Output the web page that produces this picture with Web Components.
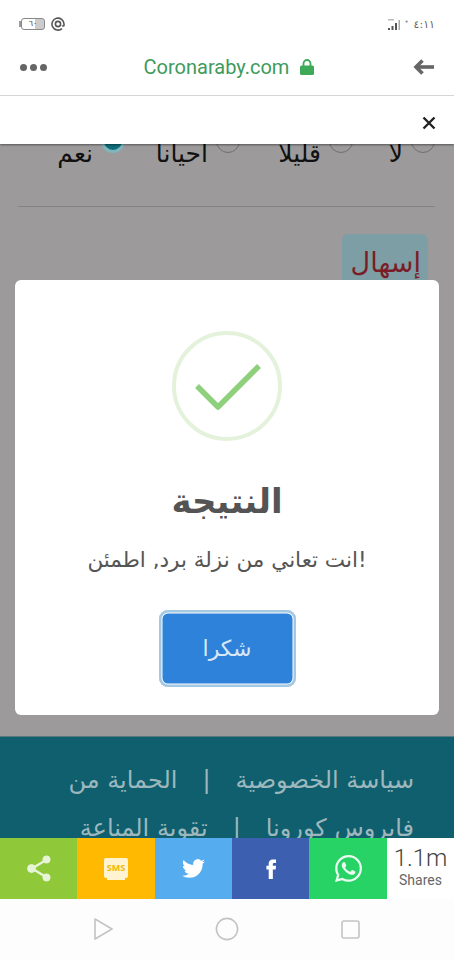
<!DOCTYPE html>
<html lang="ar">
<head>
<meta charset="utf-8">
<title>Coronaraby</title>
<style>
  html, body { margin: 0; padding: 0; height: 100%; background: #fff; }
  body { font-family: "DejaVu Sans", "Noto Sans", sans-serif; }
  .phone { width: 454px; height: 960px; display: flex; flex-direction: column; overflow: hidden; }
</style>
</head>
<body>
<div class="phone">
  <status-bar></status-bar>
  <browser-bar></browser-bar>
  <ad-strip></ad-strip>
  <page-area>
    <radio-row></radio-row>
    <symptom-tag>إسهال</symptom-tag>
    <site-footer slot="footer"></site-footer>
    <result-modal slot="modal" heading="النتيجة" message="!انت تعاني من نزلة برد, اطمئن" action="شكرا"></result-modal>
  </page-area>
  <share-bar></share-bar>
  <nav-bar></nav-bar>
</div>

<script>
class StatusBar extends HTMLElement {
  connectedCallback() {
    this.attachShadow({ mode: 'open' });
    this.shadowRoot.innerHTML = `
      <style>
        :host { display: flex; justify-content: space-between; align-items: center; height: 48px; padding: 0 19px 0 21px; box-sizing: border-box; color: #666; font-family: "DejaVu Sans", sans-serif; }
        .left, .right { display: flex; align-items: center; }
        .left { gap: 6px; }
        .right { gap: 2px; }
        .batt { position: relative; width: 24px; height: 12px; border: 1px solid #888; border-radius: 3px; box-sizing: border-box; font-size: 8px; line-height: 10px; text-align: center; background: linear-gradient(90deg, #fff 58%, #ccc 58%); color: #444; }
        .batt::before { content: ""; position: absolute; left: -3px; top: 2px; width: 2px; height: 6px; background: #999; }
        .time { font-size: 11px; margin-left: 3px; color: #666; }
        .dot { font-size: 7px; color: #888; margin-bottom: 5px; }
      </style>
      <div class="left">
        <div class="batt">٦٠</div>
        <svg width="14" height="14" viewBox="0 0 14 14" fill="none" stroke="#555" stroke-width="1.6"><path d="M11 11.6A6 6 0 1 1 13 7v1.2c0 1-1.6 1-1.6 0"/><circle cx="7" cy="7" r="2.6"/></svg>
      </div>
      <div class="right" dir="ltr">
        <svg width="14" height="13" viewBox="0 0 14 13" fill="#555"><rect x="0" y="10" width="2" height="2"/><rect x="3.500" y="8" width="2" height="4"/><rect x="7" y="5" width="2" height="7"/><rect x="10.500" y="2" width="1.500" height="10" fill="#aaa"/><rect x="0" y="1" width="6" height="1.500" fill="#bbb"/></svg>
        <span class="dot">•</span>
        <span class="time">٤:١١</span>
      </div>`;
  }
}

class BrowserBar extends HTMLElement {
  connectedCallback() {
    this.attachShadow({ mode: 'open' });
    this.shadowRoot.innerHTML = `
      <style>
        :host { display: flex; align-items: center; justify-content: space-between; height: 48px; padding: 0 20px 9px; box-sizing: border-box; border-bottom: 1px solid #ddd; }
        .dots { display: flex; gap: 3px; width: 27px; }
        .dots i { width: 7px; height: 7px; border-radius: 50%; background: #666; }
        .url { display: flex; align-items: center; gap: 11px; margin-right: 2px; font: 20px Roboto, sans-serif; color: #3f9a5c; }
      </style>
      <div class="dots"><i></i><i></i><i></i></div>
      <div class="url">
        <span>Coronaraby.com</span>
        <svg width="14" height="16" viewBox="0 0 14 16"><path d="M3.500 7V4.500a3.500 3.500 0 0 1 7 0V7" fill="none" stroke="#3fa95a" stroke-width="1.800"/><rect x="0" y="6.500" width="14" height="9.500" rx="1.500" fill="#3fa95a"/></svg>
      </div>
      <svg width="21" height="16" viewBox="0 0 21 16" fill="none" stroke="#666" stroke-width="3.600"><path d="M21 8H4"/><path d="M9.500 1.500L3 8l6.500 6.500"/></svg>`;
  }
}

class AdStrip extends HTMLElement {
  connectedCallback() {
    this.attachShadow({ mode: 'open' });
    this.shadowRoot.innerHTML = `
      <style>
        :host { display: flex; align-items: center; justify-content: flex-end; height: 48px; padding: 6px 18px 0 0; box-sizing: border-box; background: #fff; position: relative; z-index: 2; box-shadow: 0 1px 2px rgba(0,0,0,.45); }
      </style>
      <svg width="14" height="14" viewBox="0 0 14 14" stroke="#222" stroke-width="2.400"><path d="M1.500 1.500l11 11M12.500 1.500l-11 11"/></svg>`;
  }
}

class PageArea extends HTMLElement {
  connectedCallback() {
    this.attachShadow({ mode: 'open' });
    this.shadowRoot.innerHTML = `
      <style>
        :host { display: flex; flex-direction: column; flex: 1; min-height: 0; position: relative; background: #9c9a9b; }
        .scroll { flex: 1; min-height: 0; overflow: hidden; }
        .inner { margin-top: -15px; }
      </style>
      <div class="scroll"><div class="inner"><slot></slot></div></div>
      <slot name="footer"></slot>
      <slot name="modal"></slot>`;
  }
}

class RadioRow extends HTMLElement {
  connectedCallback() {
    this.attachShadow({ mode: 'open' });
    const items = [['لا', false], ['قليلا', false], ['احيانا', false], ['نعم', true]];
    this.shadowRoot.innerHTML = `
      <style>
        :host { display: block; margin: 0 19px 0 18px; height: 78px; border-bottom: 1px solid #858484; box-sizing: border-box; direction: rtl; font-family: "DejaVu Sans", sans-serif; }
        .row { display: grid; grid-template-columns: 82px 113px 115px auto; }
        label { display: flex; align-items: flex-start; gap: 8px; font-size: 25px; color: #111; line-height: 30px; white-space: nowrap; }
        .r { width: 24px; height: 24px; flex: none; border-radius: 50%; box-sizing: border-box; border: 1px solid #6f6f6f; }
        .r.on { background: #0d6c78; border: 3px solid #7fb6bd; }
        span { padding-top: 10px; }
      </style>
      <div class="row">${items.map(([t, on]) => `<label><div class="r${on ? ' on' : ''}"></div><span>${t}</span></label>`).join('')}</div>`;
  }
}

class SymptomTag extends HTMLElement {
  connectedCallback() {
    this.attachShadow({ mode: 'open' });
    this.shadowRoot.innerHTML = `
      <style>
        :host { display: flex; justify-content: flex-start; margin: 27px 26px 0 0; direction: rtl; }
        div { width: 86px; height: 70px; box-sizing: border-box; padding: 12px 7px 0 0; border-radius: 6px; background: #7e9ea5; color: #7a1d27; font: 27px/34px "DejaVu Sans", sans-serif; text-align: right; white-space: nowrap; }
      </style>
      <div><slot></slot></div>`;
  }
}

class SiteFooter extends HTMLElement {
  connectedCallback() {
    this.attachShadow({ mode: 'open' });
    this.shadowRoot.innerHTML = `
      <style>
        :host { display: block; flex: none; height: 102px; overflow: hidden; box-sizing: border-box; padding: 19px 40px 0 0; background: #0f5f6e; border-top: 1px solid #5a7a82; color: #9db8bd; direction: rtl; font: 24px/48px "DejaVu Sans", sans-serif; }
        .line { display: flex; white-space: nowrap; }
        .sep { margin: 0 25px; }
      </style>
      <div class="line"><span>سياسة الخصوصية</span><span class="sep">|</span><span>الحماية من</span></div>
      <div class="line"><span>فايروس كورونا</span><span class="sep">|</span><span>تقوية المناعة</span></div>`;
  }
}

class ResultModal extends HTMLElement {
  connectedCallback() {
    this.attachShadow({ mode: 'open' });
    this.shadowRoot.innerHTML = `
      <style>
        :host { position: absolute; left: 15px; top: 136px; width: 424px; height: 435px; box-sizing: border-box; padding-top: 51px; display: flex; flex-direction: column; align-items: center; background: #fff; border-radius: 6px; font-family: "DejaVu Sans", sans-serif; color: #555; }
        svg { display: block; }
        h2 { margin: 37px 0 0; font-size: 34px; line-height: 46px; font-weight: 700; color: #545454; }
        p { margin: 21px 0 0; font-size: 21.500px; line-height: 30px; color: #555; white-space: nowrap; }
        button { margin-top: 35px; width: 137px; height: 77px; border-radius: 9px; border: none; background: #2f82d9; box-shadow: inset 0 0 0 2.500px #a4c8e2, inset 0 0 0 3.500px #fff; color: #d9e8f7; font: 22px "DejaVu Sans", sans-serif; padding: 0; }
      </style>
      <svg width="110" height="110" viewBox="0 0 110 110" fill="none">
        <circle cx="55" cy="55" r="53" stroke="#e4f2dc" stroke-width="4"/>
        <path d="M25 55l21 21L87 35" stroke="#8fd07d" stroke-width="5.500" stroke-linejoin="round"/>
      </svg>
      <h2 dir="rtl">${this.getAttribute('heading')}</h2>
      <p dir="rtl">${this.getAttribute('message')}</p>
      <button>${this.getAttribute('action')}</button>`;
  }
}

class ShareBar extends HTMLElement {
  connectedCallback() {
    this.attachShadow({ mode: 'open' });
    this.shadowRoot.innerHTML = `
      <style>
        :host { display: grid; grid-template-columns: 77px 78px 77px 77px 78px 67px; height: 61px; position: relative; z-index: 1; }
        .b { display: flex; align-items: center; justify-content: center; }
        .count { display: flex; flex-direction: column; align-items: center; background: #fff; padding-top: 7px; box-sizing: border-box; }
        b { font: 300 24px/26px Roboto, sans-serif; color: #444; }
        small { margin-top: 2px; font: 14px/15px Roboto, sans-serif; color: #666; }
        .sms { width: 24px; height: 20px; margin-top: -2px; border-radius: 2px; background: #fff3d0; color: #f2b705; font: 700 9px/20px "Open Sans", sans-serif; text-align: center; position: relative; }
        .sms::after { content: ""; position: absolute; left: 3px; right: 3px; bottom: -2px; height: 2px; background: #fff3d0; }
      </style>
      <div class="b" style="background:#8fc93a">
        <svg width="24" height="27" viewBox="0 0 24 27" fill="#e8f4d8" stroke="#e8f4d8"><path d="M19 5L5 13.500 19 22" fill="none" stroke-width="2.400"/><circle cx="19.500" cy="4.500" r="3.600"/><circle cx="4.500" cy="13.500" r="3.900"/><circle cx="19.500" cy="22.500" r="3.600"/></svg>
      </div>
      <div class="b" style="background:#ffb900"><div class="sms">SMS</div></div>
      <div class="b" style="background:#55acee">
        <svg width="23" height="23" viewBox="0 0 24 24" fill="#fff"><path d="M23.953 4.570a10 10 0 01-2.825.775 4.958 4.958 0 002.163-2.723c-.951.555-2.005.959-3.127 1.184a4.920 4.920 0 00-8.384 4.482C7.690 8.095 4.067 6.130 1.640 3.162a4.822 4.822 0 00-.666 2.475c0 1.710.870 3.213 2.188 4.096a4.904 4.904 0 01-2.228-.616v.060a4.923 4.923 0 003.946 4.827 4.996 4.996 0 01-2.212.085 4.936 4.936 0 004.604 3.417 9.867 9.867 0 01-6.102 2.105c-.390 0-.779-.023-1.170-.067a13.995 13.995 0 007.557 2.209c9.053 0 13.998-7.496 13.998-13.985 0-.210 0-.420-.015-.630A9.935 9.935 0 0024 4.590z"/></svg>
      </div>
      <div class="b" style="background:#3d5fb0">
        <svg width="22" height="22" viewBox="0 0 24 24" fill="#fff"><path d="M14 8.500V6.500c0-.9.600-1.100 1-1.100h2.500V1.600L14.100 1.500C10.300 1.500 9.500 4.300 9.500 6.200v2.300H7v4h2.500V23H14V12.500h3.100l.4-4z"/></svg>
      </div>
      <div class="b" style="background:#28d366">
        <svg width="27" height="27" viewBox="0 0 24 24" fill="#eafaf0"><path d="M17.472 14.382c-.297-.149-1.758-.867-2.030-.967-.273-.099-.471-.148-.670.150-.197.297-.767.966-.940 1.164-.173.199-.347.223-.644.075-.297-.150-1.255-.463-2.390-1.475-.883-.788-1.480-1.761-1.653-2.059-.173-.297-.018-.458.130-.606.134-.133.298-.347.446-.520.149-.174.198-.298.298-.497.099-.198.050-.371-.025-.520-.075-.149-.669-1.612-.916-2.207-.242-.579-.487-.500-.669-.510-.173-.008-.371-.010-.570-.010-.198 0-.520.074-.792.372-.272.297-1.040 1.016-1.040 2.479 0 1.462 1.065 2.875 1.213 3.074.149.198 2.096 3.200 5.077 4.487.709.306 1.262.489 1.694.625.712.227 1.360.195 1.871.118.571-.085 1.758-.719 2.006-1.413.248-.694.248-1.289.173-1.413-.074-.124-.272-.198-.570-.347m-5.421 7.403h-.004a9.870 9.870 0 01-5.031-1.378l-.361-.214-3.741.982.998-3.648-.235-.374a9.860 9.860 0 01-1.510-5.260c.001-5.450 4.436-9.884 9.888-9.884 2.640 0 5.122 1.030 6.988 2.898a9.825 9.825 0 012.893 6.994c-.003 5.450-4.437 9.884-9.885 9.884m8.413-18.297A11.815 11.815 0 0012.050 0C5.495 0 .160 5.335.157 11.892c0 2.096.547 4.142 1.588 5.945L.057 24l6.305-1.654a11.882 11.882 0 005.683 1.448h.005c6.554 0 11.890-5.335 11.893-11.893a11.821 11.821 0 00-3.480-8.413z"/></svg>
      </div>
      <div class="count"><b>1.1m</b><small>Shares</small></div>`;
  }
}

class NavBar extends HTMLElement {
  connectedCallback() {
    this.attachShadow({ mode: 'open' });
    this.shadowRoot.innerHTML = `
      <style>
        :host { display: flex; align-items: center; height: 61px; background: #fdfdfd; position: relative; }
        svg { position: absolute; }
      </style>
      <svg style="left:93px;top:18px" width="21" height="24" viewBox="0 0 21 24" fill="none" stroke="#c4c4c4" stroke-width="1.600" stroke-linejoin="round"><path d="M2 2l17 10L2 22z"/></svg>
      <svg style="left:215px;top:18px" width="24" height="24" viewBox="0 0 24 24" fill="none" stroke="#c4c4c4" stroke-width="1.600"><circle cx="12" cy="12" r="10.600"/></svg>
      <svg style="left:341px;top:21px" width="19" height="19" viewBox="0 0 19 19" fill="none" stroke="#c4c4c4" stroke-width="1.600"><rect x="1" y="1" width="17" height="17" rx="2"/></svg>`;
  }
}

customElements.define('status-bar', StatusBar);
customElements.define('browser-bar', BrowserBar);
customElements.define('ad-strip', AdStrip);
customElements.define('page-area', PageArea);
customElements.define('radio-row', RadioRow);
customElements.define('symptom-tag', SymptomTag);
customElements.define('site-footer', SiteFooter);
customElements.define('result-modal', ResultModal);
customElements.define('share-bar', ShareBar);
customElements.define('nav-bar', NavBar);
</script>
</body>
</html>
